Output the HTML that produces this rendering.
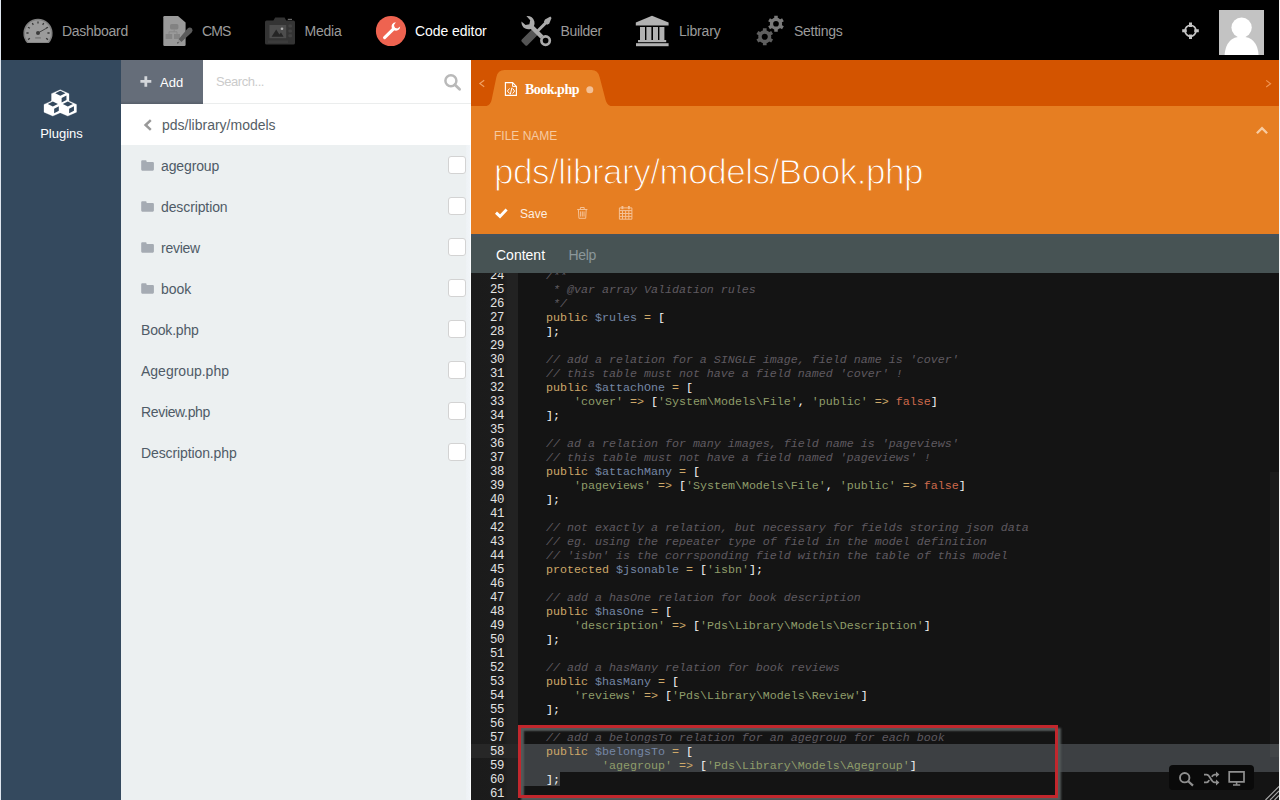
<!DOCTYPE html>
<html lang="en">
<head>
<meta charset="utf-8">
<title>Code editor | OctoberCMS</title>
<style>
*{box-sizing:border-box;margin:0;padding:0}
html,body{width:1280px;height:800px;overflow:hidden;background:#000;font-family:"Liberation Sans",sans-serif;}
.abs{position:absolute}
#nav{position:absolute;left:0;top:0;width:1280px;height:60px;background:#000}
.nt{position:absolute;top:22px;height:18px;line-height:18px;font-size:14px;color:#9b9b9b;white-space:nowrap;transform-origin:0 50%}
.nt.act{color:#fff}
.ni{position:absolute}
#side{position:absolute;left:0;top:60px;width:121px;height:740px;background:#34495e}
#side .lbl{position:absolute;left:0;width:123px;text-align:center;top:65px;font-size:13px;line-height:18px;color:#fff}
#panel{position:absolute;left:121px;top:60px;width:350px;height:740px;background:#ecf0f1}
#addbtn{position:absolute;left:0;top:0;width:82px;height:44px;background:linear-gradient(#656d79 0,#656d79 41px,#565e69 44px)}
#addbtn span{position:absolute;left:39px;top:14px;font-size:13px;line-height:18px;color:#fff}
#search{position:absolute;left:82px;top:0;width:268px;height:44px;background:#fff;border-bottom:1px solid #ebeded}
#search span{position:absolute;left:13px;top:12px;font-size:13px;letter-spacing:-0.45px;line-height:20px;color:#cbcbcb}
#crumb{position:absolute;left:0;top:44px;width:350px;height:41px;background:#fff}
#crumb span{position:absolute;left:41px;top:11px;font-size:14px;line-height:20px;color:#555e66}
.row{position:absolute;left:0;width:350px;height:41px}
.row .t{position:absolute;top:11px;font-size:14px;line-height:20px;color:#4f5b67;white-space:nowrap}
.row .cb{position:absolute;left:327px;top:11px;width:18px;height:18px;background:#fff;border:1px solid #d3d3d3;border-radius:3px}
.row svg{position:absolute;left:20px;top:15px}
#editor{position:absolute;left:471px;top:60px;width:809px;height:740px;background:#141414}
#tabs{position:absolute;left:0;top:0;width:809px;height:46px;background:#d35400}
#head{position:absolute;left:0;top:46px;width:809px;height:128px;background:#e67e22}
#sec{position:absolute;left:0;top:174px;width:809px;height:39px;background:#475354}
#code{position:absolute;left:0;top:213px;width:809px;height:527px;background:#141414;overflow:hidden}
#tabt{position:absolute;left:54px;top:21px;letter-spacing:-0.5px;font-family:"Liberation Serif",serif;font-weight:bold;font-size:14px;line-height:18px;color:#fff;white-space:nowrap}
#fnl{position:absolute;left:23px;top:22px;font-size:12px;line-height:16px;color:#f6caa1;white-space:nowrap}
#fnt{position:absolute;left:23px;top:43.5px;font-size:35px;line-height:44px;letter-spacing:-0.47px;color:#fff;white-space:nowrap;-webkit-text-stroke:1.1px #e67e22}
#savet{position:absolute;left:49px;top:98.7px;font-size:12px;line-height:18px;color:#fdeee0;white-space:nowrap}
#sec{border-top:3px solid #46535c}
.st{position:absolute;top:8px;font-size:14px;line-height:20px;color:#8b979a;white-space:nowrap}
.st.on{color:#fff}
#gut{position:absolute;left:0;top:0;width:47px;height:527px;background:linear-gradient(90deg,#1b1b1b 0,#1c1c1c 33px,#222 37px,#222 100%)}
#gact{position:absolute;left:0;top:471px;width:47px;height:14px;background:#272727}
#gnum{position:absolute;left:0;top:-4px;width:33px;text-align:right;font-family:"Liberation Mono",monospace;font-size:12.3px;letter-spacing:-0.38px;line-height:14px;color:#e2e2e2}
#gnum div{height:14px}
#src{position:absolute;left:47px;top:-4px;margin:0;font-family:"Liberation Mono",monospace;font-size:11.67px;line-height:14px;color:#f8f8f8;white-space:pre}
#src div{height:14px}
#src i{color:#5f5a60;font-style:italic}
#src b{font-weight:normal}
#src .k,#src .o{color:#cda869}
#src .v{color:#7587a6}
#src .s{color:#8f9d6a}
#src .c{color:#cf6a4c}
.sel{position:absolute;background:#3d4043}
#thumb{position:absolute;left:799px;top:199px;width:9px;height:285px;background:rgba(255,255,255,.03)}
#redbox{position:absolute;left:47px;top:452px;width:540px;height:73px;border:3.2px solid #c1272d;box-shadow:3px 3px 2px #535959,inset 3px 3px 2px #535959}
#tb{position:absolute;left:698px;top:492px;width:85px;height:25px;background:#0a0a0a;border-radius:4px}
#tb svg{position:absolute;left:0;top:0}
#edge{position:absolute;left:1278.6px;top:0;width:2px;height:800px;background:#f4f4f4}
#ledge{position:absolute;left:0;top:0;width:1px;height:800px;background:#dfe6ee}
</style>
</head>
<body>
<div id="nav">
<svg class="ni" style="left:0;top:0" width="1280" height="60" viewBox="0 0 1280 60">
  <!-- dashboard gauge -->
  <g>
    <path d="M27.04 43 A14.6 14.6 0 1 1 48.96 43 Z" fill="#808080"/>
    <path d="M28.4 42.3 A13.1 13.1 0 1 1 47.6 42.3 Z" fill="#9b9b9b"/>
    <g stroke="#3a3a3a" stroke-width="1.3" stroke-linecap="butt">
      <path d="M38 21.4v2.2M32.3 23l1 1.9M43.7 23l-1 1.9M28 27.2l1.9 1.1M48 27.2l-1.9 1.1M26.4 33h2.2M49.6 33h-2.2M28 39.6l1.9-1.3M48 39.6l-1.9-1.3"/>
    </g>
    <path d="M38 33 L46.8 28" stroke="#444" stroke-width="1"/>
    <circle cx="38" cy="33" r="2" fill="#3c3c3c"/>
    <rect x="35.2" y="37.2" width="5.6" height="1.4" fill="#777"/>
  </g>
  <!-- cms doc + pencil -->
  <g>
    <path d="M164.4 16 H178 L185.6 22.4 V44.8 Q185.6 46 184.4 46 H164.4 Q163.3 46 163.3 44.8 V17.2 Q163.3 16 164.4 16Z" fill="#9a9a9a"/>
    <rect x="170" y="24" width="8.4" height="5.4" rx="1.6" fill="#828282"/>
    <rect x="165.6" y="34" width="6.6" height="5" fill="#858585"/>
    <rect x="174" y="34" width="6" height="5" fill="#858585"/>
    <path d="M174.2 29.4v2.4M169 34v-2.2h8v2.2" stroke="#888" stroke-width="1" fill="none"/>
    <path d="M187.6 28.6 Q189.8 26.4 192 28.6 Q193.4 30.6 191.6 32.4 L181.4 42 L178.6 39.2 Z" fill="#5c5c5c"/>
    <path d="M178.6 39.2 L181.4 42 L177.4 43.4 Z" fill="#8d8d8d"/>
    <path d="M177.2 43.5 l1.6-.6 -1-1z" fill="#222"/>
  </g>
  <!-- media camera -->
  <g>
    <path d="M266.6 20.6 H273.4 L275.2 17.6 H284.6 L286.2 20.6 H293.4 Q295 20.6 295 22.2 V43 Q295 44.6 293.4 44.6 H266.6 Q265 44.6 265 43 V22.2 Q265 20.6 266.6 20.6Z" fill="#343434"/>
    <rect x="269.4" y="25" width="16.8" height="13.2" fill="#4d4d4d"/>
    <path d="M271.6 36.8 L276.2 29.6 L279.4 34.4 L281 32.6 L283.6 36.8Z" fill="#252525"/>
    <circle cx="282" cy="28.8" r="1.3" fill="#b0b0b0"/>
    <rect x="288.4" y="24.6" width="3.6" height="3" rx="1" fill="#434343"/>
    <rect x="288.4" y="29.4" width="3.6" height="3" rx="1" fill="#434343"/>
    <rect x="288.4" y="34.2" width="3.6" height="3" rx="1" fill="#434343"/>
    <rect x="287.8" y="18.8" width="4.2" height="1.2" fill="#6a6a6a"/>
    <rect x="268" y="40.4" width="20" height="2.6" fill="#3c3c3c"/>
  </g>
  <!-- code editor -->
  <g>
    <circle cx="391" cy="31" r="15.1" fill="#ee6350"/>
    <path d="M384.6 37.6 L393.8 28.6" stroke="#fff" stroke-width="3.1" stroke-linecap="round"/>
    <path d="M395.9 22.3 A4.4 4.4 0 0 0 391.9 28.6 L394.2 30.3 A4.4 4.4 0 0 0 400.2 26.4 L397.4 28.4 L394.7 27.7 L394 25 Z" fill="#fff"/>
  </g>
  <!-- builder -->
  <g>
    <rect x="-4" y="0" width="8" height="18.5" rx="1.6" fill="#555" transform="translate(536.6 30.4) rotate(45)"/>
    <path d="M547 21.6L537.4 31.2" stroke="#ababab" stroke-width="2.9"/>
    <path d="M550.4 16.6L551.5 18L549.2 23.8L547 24.8L543.9 21.7L545 19.4Z" fill="#ababab"/>
    <path d="M526.4 16 Q532.6 15.6 534.4 21.4 Q534.9 24 533.9 25.9 L543.4 35.6 L540.4 38.5 L530.8 28.9 Q528 29.9 525.2 28.6 Q521.4 26.4 521.4 21.4 L525.6 25 L529.4 24.2 L530.2 20.2 Z" fill="#ababab"/>
    <circle cx="545.6" cy="40.6" r="4.2" fill="none" stroke="#ababab" stroke-width="2.7"/>
  </g>
  <!-- library -->
  <g fill="#b2b2b2">
    <path d="M652 15.8 L668.6 22.4 V25.6 H635.8 V22.4 Z"/>
    <rect x="640" y="27" width="5" height="13.4"/>
    <rect x="646.4" y="27" width="5" height="13.4"/>
    <rect x="653" y="27" width="5" height="13.4"/>
    <rect x="659.4" y="27" width="5" height="13.4"/>
    <rect x="638" y="40" width="28.2" height="2.2"/>
    <rect x="636" y="43.2" width="32.6" height="3"/>
  </g>
  <!-- settings gears -->
  <g transform="translate(776 23.75)" fill="#7a7a7a"><circle r="4.5" fill="none" stroke="#7a7a7a" stroke-width="3.3"/><rect x="-1.75" y="-8" width="3.5" height="3.5" transform="rotate(0)"/><rect x="-1.75" y="-8" width="3.5" height="3.5" transform="rotate(60)"/><rect x="-1.75" y="-8" width="3.5" height="3.5" transform="rotate(120)"/><rect x="-1.75" y="-8" width="3.5" height="3.5" transform="rotate(180)"/><rect x="-1.75" y="-8" width="3.5" height="3.5" transform="rotate(240)"/><rect x="-1.75" y="-8" width="3.5" height="3.5" transform="rotate(300)"/></g>
  <g transform="translate(764.75 36.75)" fill="#5f5f5f"><circle r="4.8" fill="none" stroke="#5f5f5f" stroke-width="3.5"/><rect x="-1.85" y="-8.5" width="3.7" height="3.7" transform="rotate(0)"/><rect x="-1.85" y="-8.5" width="3.7" height="3.7" transform="rotate(60)"/><rect x="-1.85" y="-8.5" width="3.7" height="3.7" transform="rotate(120)"/><rect x="-1.85" y="-8.5" width="3.7" height="3.7" transform="rotate(180)"/><rect x="-1.85" y="-8.5" width="3.7" height="3.7" transform="rotate(240)"/><rect x="-1.85" y="-8.5" width="3.7" height="3.7" transform="rotate(300)"/></g>
  <!-- crosshair -->
  <g stroke="#c4c4c4" fill="none">
    <circle cx="1190.5" cy="30.8" r="5.5" stroke-width="1.7"/>
    <path d="M1190.5 22.5v4.6M1190.5 34.5v4.6M1182.2 30.8h4.6M1194.2 30.8h4.6" stroke-width="3"/>
  </g>
  <!-- avatar -->
  <g>
    <rect x="1219" y="10" width="45" height="45" fill="#c3c3c3"/>
    <circle cx="1241.6" cy="27.6" r="10.2" fill="#fff"/>
    <path d="M1224.6 55 Q1226 37 1241.6 36.6 Q1257.2 37 1258.6 55Z" fill="#fff"/>
  </g>
</svg>
<span class="nt" id="nt1" style="left:62px;letter-spacing:-0.28px">Dashboard</span>
<span class="nt" id="nt2" style="left:202px;letter-spacing:-0.9px">CMS</span>
<span class="nt" id="nt3" style="left:304.5px;letter-spacing:-0.22px">Media</span>
<span class="nt act" id="nt4" style="left:415px;letter-spacing:-0.06px">Code editor</span>
<span class="nt" id="nt5" style="left:560.5px;letter-spacing:-0.33px">Builder</span>
<span class="nt" id="nt6" style="left:679px;letter-spacing:-0.19px">Library</span>
<span class="nt" id="nt7" style="left:794px;letter-spacing:-0.26px">Settings</span>
</div>
<div id="side"><svg class="abs" style="left:0;top:0" width="121" height="80" viewBox="0 60 121 80"><path d="M60.25 89.75 L69.0 93.625 L69.0 101.375 L60.25 105.25 L51.5 101.375 L51.5 93.625Z" fill="#fff" stroke="#fff" stroke-width="0.3" stroke-linejoin="round"/><path d="M60.35 90.7 L65.45 93.2 L60.35 95.7 L55.25 93.2Z" fill="#34495e"/><path d="M61.65 97.9 L66.45 95.6 L66.45 100.1 L61.65 102.5Z" fill="#34495e"/><path d="M52.75 100.5 L61.5 104.375 L61.5 112.125 L52.75 116.0 L44.0 112.125 L44.0 104.375Z" fill="#fff" stroke="#fff" stroke-width="0.3" stroke-linejoin="round"/><path d="M52.85 101.45 L57.95 103.95 L52.85 106.45 L47.75 103.95Z" fill="#34495e"/><path d="M54.15 108.65 L58.95 106.35 L58.95 110.85 L54.15 113.25Z" fill="#34495e"/><path d="M67.75 100.5 L76.5 104.375 L76.5 112.125 L67.75 116.0 L59.0 112.125 L59.0 104.375Z" fill="#fff" stroke="#fff" stroke-width="0.3" stroke-linejoin="round"/><path d="M67.85 101.45 L72.95 103.95 L67.85 106.45 L62.75 103.95Z" fill="#34495e"/><path d="M69.15 108.65 L73.95 106.35 L73.95 110.85 L69.15 113.25Z" fill="#34495e"/></svg><div class="lbl">Plugins</div></div>
<div id="panel">
  <div id="addbtn"><svg class="abs" style="left:19.3px;top:16.4px" width="12.2" height="11.2" viewBox="0 0 13 12"><path d="M4.7 0.3h3v4h4.4v3H7.7v4.2h-3V7.3H0.4v-3h4.3z" fill="#d3d6da"/></svg><span>Add</span></div>
  <div id="search"><span>Search...</span><svg class="abs" style="left:240px;top:13px" width="20" height="20" viewBox="443 73 20 20"><circle cx="450.9" cy="80.8" r="5.5" fill="none" stroke="#b9b9b9" stroke-width="2.5"/><path d="M454.9 84.8L459.6 89.3" stroke="#b9b9b9" stroke-width="2.8" stroke-linecap="round"/></svg></div>
  <div id="crumb"><svg class="abs" style="left:22px;top:14px" width="10" height="14" viewBox="143 118 10 14"><path d="M150.8 120.2L145.6 125L150.8 129.8" fill="none" stroke="#999" stroke-width="2.5"/></svg><span>pds/library/models</span></div>
<div class="row" style="top:85px"><svg width="14" height="12" viewBox="0 0 14 12"><path d="M0.2 1.2Q0.2 0.2 1.2 0.2H4.6Q5.6 0.2 5.6 1.2V2H11.8Q12.9 2 12.9 3V9.6Q12.9 10.7 11.8 10.7H1.2Q0.2 10.7 0.2 9.6Z" fill="#a5abb3"/></svg><span class="t" style="left:40px;letter-spacing:-0.12px">agegroup</span><div class="cb"></div></div>
<div class="row" style="top:126px"><svg width="14" height="12" viewBox="0 0 14 12"><path d="M0.2 1.2Q0.2 0.2 1.2 0.2H4.6Q5.6 0.2 5.6 1.2V2H11.8Q12.9 2 12.9 3V9.6Q12.9 10.7 11.8 10.7H1.2Q0.2 10.7 0.2 9.6Z" fill="#a5abb3"/></svg><span class="t" style="left:40px;letter-spacing:-0.11px">description</span><div class="cb"></div></div>
<div class="row" style="top:167px"><svg width="14" height="12" viewBox="0 0 14 12"><path d="M0.2 1.2Q0.2 0.2 1.2 0.2H4.6Q5.6 0.2 5.6 1.2V2H11.8Q12.9 2 12.9 3V9.6Q12.9 10.7 11.8 10.7H1.2Q0.2 10.7 0.2 9.6Z" fill="#a5abb3"/></svg><span class="t" style="left:40px;letter-spacing:-0.27px">review</span><div class="cb"></div></div>
<div class="row" style="top:208px"><svg width="14" height="12" viewBox="0 0 14 12"><path d="M0.2 1.2Q0.2 0.2 1.2 0.2H4.6Q5.6 0.2 5.6 1.2V2H11.8Q12.9 2 12.9 3V9.6Q12.9 10.7 11.8 10.7H1.2Q0.2 10.7 0.2 9.6Z" fill="#a5abb3"/></svg><span class="t" style="left:40px">book</span><div class="cb"></div></div>
<div class="row" style="top:249px"><span class="t" style="left:20px;letter-spacing:-0.19px">Book.php</span><div class="cb"></div></div>
<div class="row" style="top:290px"><span class="t" style="left:20px">Agegroup.php</span><div class="cb"></div></div>
<div class="row" style="top:331px"><span class="t" style="left:20px;letter-spacing:-0.34px">Review.php</span><div class="cb"></div></div>
<div class="row" style="top:372px"><span class="t" style="left:20px;letter-spacing:-0.11px">Description.php</span><div class="cb"></div></div>
<div class="abs" style="left:345px;top:85px;width:5px;height:655px;background:linear-gradient(90deg,#eef2f5 0,#f1f5f8 4px,#fbfcfd 4px)"></div>
</div>
<div id="editor">
  <div id="tabs">
    <svg class="abs" style="left:0;top:0" width="809" height="46" viewBox="471 60 809 46">
      <path d="M486.6 106 Q490.4 105 491.6 100 L496.4 77 Q497.8 70 504.6 70 H591.6 Q598 70 599.6 77 L605.6 100 Q607 105 610.6 106 Z" fill="#e67e22"/>
      <path d="M484.2 80.2L479.8 83.5L484.2 86.8" fill="none" stroke="#f1a366" stroke-width="1.1"/>
      <path d="M1266.2 80.4L1270.6 83.7L1266.2 87" fill="none" stroke="#f09552" stroke-width="1.1"/>
      <g fill="none" stroke="#fff" stroke-width="1.15">
        <path d="M505.4 82.6H512.6L516.4 86.4V95.4H505.4Z"/>
        <path d="M512.6 82.6V86.4H516.4" stroke-width="1"/>
        <path d="M509.6 88.4L507.4 91L509.6 93.6M512.6 88.4L514.6 91L512.6 93.6M511.9 87.6L510.3 94.4" stroke-width="1"/>
      </g>
      <circle cx="589.8" cy="89.8" r="3.5" fill="#f3c096"/>
    </svg>
    <span id="tabt">Book.php</span>
  </div>
  <div id="head">
    <div id="fnl">FILE NAME</div>
    <div id="fnt">pds/library/models/Book.php</div>
    <svg class="abs" style="left:0;top:0" width="809" height="128" viewBox="471 106 809 128">
      <path d="M496 212.6L500 216.4L506.6 209.6" fill="none" stroke="#fff" stroke-width="2.9"/>
      <g fill="none" stroke="#f5c195" stroke-width="1">
        <path d="M577.2 209.5H587.4M580.4 209.3V207.5H584.2V209.3M578.4 209.6L578.9 218.3H585.7L586.2 209.6M580.6 211.4V216.6M582.3 211.4V216.6M584 211.4V216.6"/>
        <path d="M619.4 207.9H631.9V219.2H619.4ZM619.4 210.6H631.9M619.4 213.5H631.9M619.4 216.4H631.9M622.5 210.6V219.2M625.65 210.6V219.2M628.8 210.6V219.2"/>
        <path d="M622.4 206V209.2M628.9 206V209.2" stroke-width="1.9"/>
      </g>
      <path d="M1256.9 133.2L1262 128.1L1267.1 133.2" fill="none" stroke="#f8cca2" stroke-width="2.3"/>
    </svg>
    <span id="savet">Save</span>
  </div>
  <div id="sec"><span class="st on" style="left:25px">Content</span><span class="st" style="left:97.5px;letter-spacing:-0.3px">Help</span></div>
  <div id="code">
    <div id="gut"><div id="gact"></div><div id="gnum"><div>24</div><div>25</div><div>26</div><div>27</div><div>28</div><div>29</div><div>30</div><div>31</div><div>32</div><div>33</div><div>34</div><div>35</div><div>36</div><div>37</div><div>38</div><div>39</div><div>40</div><div>41</div><div>42</div><div>43</div><div>44</div><div>45</div><div>46</div><div>47</div><div>48</div><div>49</div><div>50</div><div>51</div><div>52</div><div>53</div><div>54</div><div>55</div><div>56</div><div>57</div><div>58</div><div>59</div><div>60</div><div>61</div></div></div>
    <div class="sel" style="left:47px;top:471px;width:762px;height:28px"></div>
    <div class="sel" style="left:47px;top:499px;width:42px;height:14px"></div>
    <pre id="src"><div>    <i>/**</i></div><div>     <i>* @var array Validation rules</i></div><div>     <i>*/</i></div><div>    <b class="k">public</b> <b class="v">$rules</b> <b class="o">=</b> [</div><div>    ];</div><div> </div><div>    <i>// add a relation for a SINGLE image, field name is 'cover'</i></div><div>    <i>// this table must not have a field named 'cover' !</i></div><div>    <b class="k">public</b> <b class="v">$attachOne</b> <b class="o">=</b> [</div><div>        <b class="s">'cover'</b> <b class="o">=&gt;</b> [<b class="s">'System\Models\File'</b>, <b class="s">'public'</b> <b class="o">=&gt;</b> <b class="c">false</b>]</div><div>    ];</div><div> </div><div>    <i>// ad a relation for many images, field name is 'pageviews'</i></div><div>    <i>// this table must not have a field named 'pageviews' !</i></div><div>    <b class="k">public</b> <b class="v">$attachMany</b> <b class="o">=</b> [</div><div>        <b class="s">'pageviews'</b> <b class="o">=&gt;</b> [<b class="s">'System\Models\File'</b>, <b class="s">'public'</b> <b class="o">=&gt;</b> <b class="c">false</b>]</div><div>    ];</div><div> </div><div>    <i>// not exactly a relation, but necessary for fields storing json data</i></div><div>    <i>// eg. using the repeater type of field in the model definition</i></div><div>    <i>// 'isbn' is the corrsponding field within the table of this model</i></div><div>    <b class="k">protected</b> <b class="v">$jsonable</b> <b class="o">=</b> [<b class="s">'isbn'</b>];</div><div> </div><div>    <i>// add a hasOne relation for book description</i></div><div>    <b class="k">public</b> <b class="v">$hasOne</b> <b class="o">=</b> [</div><div>        <b class="s">'description'</b> <b class="o">=&gt;</b> [<b class="s">'Pds\Library\Models\Description'</b>]</div><div>    ];</div><div> </div><div>    <i>// add a hasMany relation for book reviews</i></div><div>    <b class="k">public</b> <b class="v">$hasMany</b> <b class="o">=</b> [</div><div>        <b class="s">'reviews'</b> <b class="o">=&gt;</b> [<b class="s">'Pds\Library\Models\Review'</b>]</div><div>    ];</div><div> </div><div>    <i>// add a belongsTo relation for an agegroup for each book</i></div><div>    <b class="k">public</b> <b class="v">$belongsTo</b> <b class="o">=</b> [</div><div>            <b class="s">'agegroup'</b> <b class="o">=&gt;</b> [<b class="s">'Pds\Library\Models\Agegroup'</b>]</div><div>    ];</div><div> </div></pre>
    <div id="thumb"></div>
    <div id="redbox"></div>
    <div id="tb"><svg width="85" height="25" viewBox="1169 765 85 25"><g fill="none" stroke="#8f8f8f"><circle cx="1184.7" cy="777.7" r="4.7" stroke-width="1.9"/><path d="M1188.2 781.2L1193 785.6" stroke-width="2.2"/><path d="M1204 774.6H1206.6C1210.4 774.6 1210.6 782.4 1214.6 782.4H1216.4M1204 782.4H1206.6C1208 782.4 1208.6 781.4 1209.2 780.2M1211.8 776.8C1212.6 775.4 1213.4 774.6 1214.6 774.6H1216.4" stroke-width="1.9"/><path d="M1229.2 771.8H1244V781.8H1229.2Z" stroke-width="1.7"/><path d="M1236.6 782V784.4M1233 785H1240.2" stroke-width="1.6"/></g><path d="M1216 771.6L1219.4 774.6L1216 777.6ZM1216 779.4L1219.4 782.4L1216 785.4Z" fill="#8f8f8f"/></svg></div>
    <svg class="abs" style="left:793.5px;top:513px" width="14" height="14" viewBox="0 0 14 14"><path d="M0.5 14L14 0.5M5 14L14 5M9.5 14L14 9.5" stroke="#a9a9a9" stroke-width="1.2"/></svg>
  </div>
</div>
<div id="edge"></div><div id="ledge"></div>
</body>
</html>
